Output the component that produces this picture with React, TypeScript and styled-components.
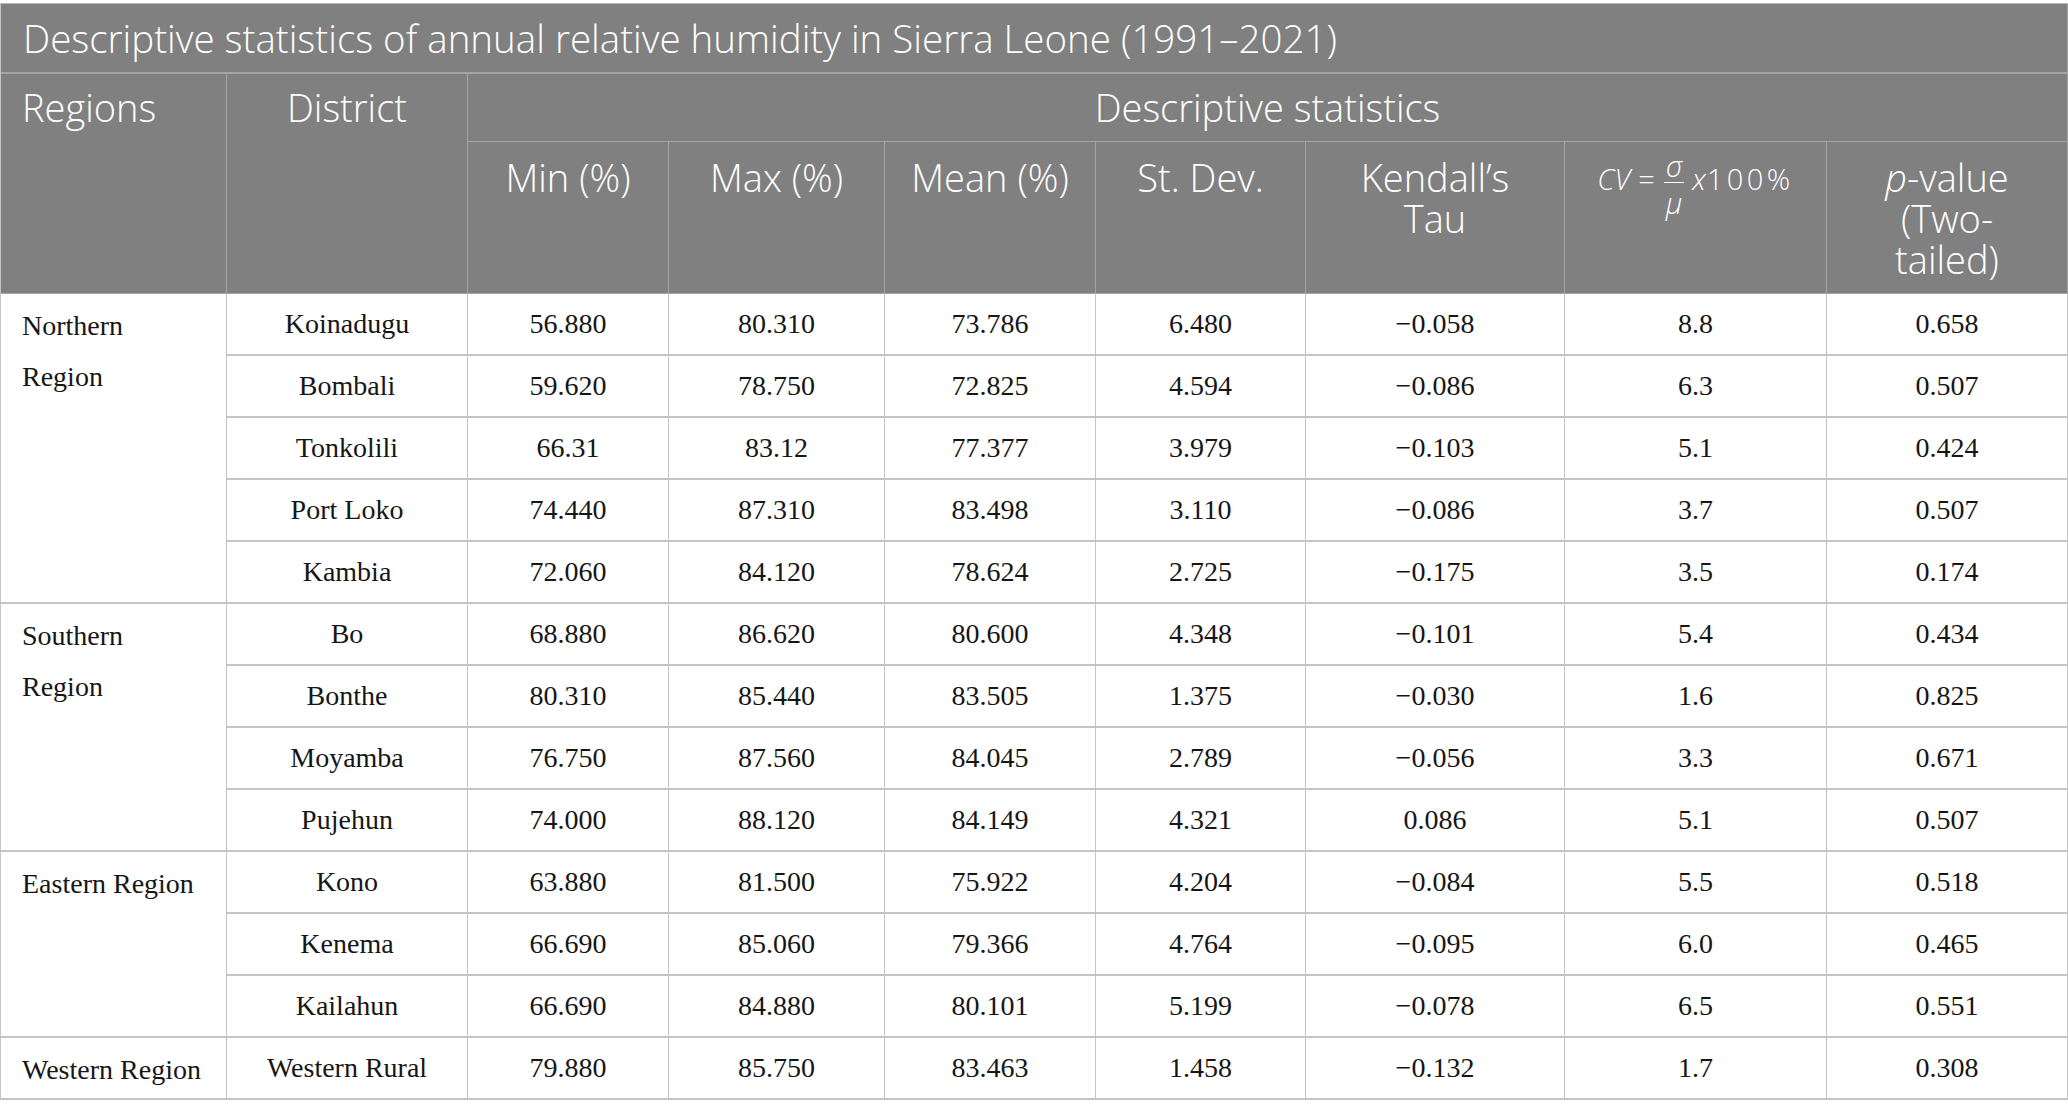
import React from "react";
import styled, { createGlobalStyle } from "styled-components";

const Global = createGlobalStyle`
  html, body { margin: 0; padding: 0; background: #ffffff; }
  body { width: 2068px; }
`;

const HEAD_BG = "#7f807f";
const HEAD_LINE = "#a3a4a3";
const BODY_LINE = "#c4c4c4";
const SANS = `"Open Sans", "Noto Sans", sans-serif`;
const SERIF = `"Liberation Serif", "DejaVu Serif", serif`;

const Page = styled.div`
  padding-top: 3px;
  width: 2068px;
`;

const Sheet = styled.div`
  display: grid;
  grid-template-columns: 226px 241px 201px 216px 211px 210px 259px 262px 241px;
  grid-template-rows: 70px 68px 152px repeat(13, 62px);
  border-top: 1px solid #b9b9b9;
  border-left: 1px solid ${BODY_LINE};
  box-sizing: border-box;
  width: 2068px;
`;

const Title = styled.div`
  grid-column: 1 / -1;
  background: ${HEAD_BG};
  color: #fff;
  font-family: ${SANS};
  font-weight: 300;
  font-size: 38.5px;
  line-height: 41px;
  padding: 14px 22px 0;
  border-right: 1px solid ${HEAD_LINE};
  border-bottom: 2px solid ${HEAD_LINE};
  box-sizing: border-box;
  white-space: nowrap;
`;

const Head = styled.div<{ $rows?: number; $cols?: number; $align?: "left" | "center"; $top?: number }>`
  grid-row: span ${(p) => p.$rows ?? 1};
  grid-column: span ${(p) => p.$cols ?? 1};
  background: ${HEAD_BG};
  color: #fff;
  font-family: ${SANS};
  font-weight: 300;
  font-size: 38px;
  line-height: 41px;
  text-align: ${(p) => p.$align ?? "center"};
  padding: ${(p) => p.$top ?? 15}px ${(p) => (p.$align === "left" ? "12px 0 21px" : "6px 0 6px")};
  border-right: 1px solid ${HEAD_LINE};
  border-bottom: 1px solid ${HEAD_LINE};
  box-sizing: border-box;
`;

const Italic = styled.i`
  font-style: italic;
`;

const Formula = styled.span`
  display: inline-flex;
  align-items: flex-start;
  font-family: ${SANS};
  font-weight: 300;
  font-size: 29px;
  line-height: 28px;
`;

const Sym = styled.span<{ $italic?: boolean; $gap?: number }>`
  margin-top: 13px;
  font-style: ${(p) => (p.$italic ? "italic" : "normal")};
  margin-right: ${(p) => p.$gap ?? 0}px;
`;

const Frac = styled.span`
  display: inline-flex;
  flex-direction: column;
  align-items: center;
  margin: 0 8px 0 9px;
  font-style: italic;
`;

const Numer = styled.span`
  display: block;
  padding: 0 2px 2px;
  border-bottom: 1.5px solid #fff;
  text-align: center;
`;

const Denom = styled.span`
  display: block;
  padding-top: 6px;
  text-align: center;
`;

const Digits = styled.span`
  margin-top: 13px;
  margin-left: 1px;
  letter-spacing: 3.5px;
`;

const RegionCell = styled.div<{ $rows: number }>`
  grid-row: span ${(p) => p.$rows};
  font-family: ${SERIF};
  font-size: 28px;
  line-height: 51px;
  color: #161616;
  padding: 6px 10px 0 21px;
  border-right: 1px solid ${BODY_LINE};
  border-bottom: 2px solid ${BODY_LINE};
  box-sizing: border-box;
`;

const Line = styled.div`
  white-space: nowrap;
`;

const Cell = styled.div`
  display: flex;
  align-items: center;
  justify-content: center;
  font-family: ${SERIF};
  font-size: 28px;
  color: #161616;
  border-right: 1px solid ${BODY_LINE};
  border-bottom: 2px solid ${BODY_LINE};
  box-sizing: border-box;
  white-space: nowrap;
`;

type Row = [string, string, string, string, string, string, string, string];
type Region = { name: string[]; rows: Row[] };

const DATA: Region[] = [
  {
    name: ["Northern", "Region"],
    rows: [
      ["Koinadugu", "56.880", "80.310", "73.786", "6.480", "−0.058", "8.8", "0.658"],
      ["Bombali", "59.620", "78.750", "72.825", "4.594", "−0.086", "6.3", "0.507"],
      ["Tonkolili", "66.31", "83.12", "77.377", "3.979", "−0.103", "5.1", "0.424"],
      ["Port Loko", "74.440", "87.310", "83.498", "3.110", "−0.086", "3.7", "0.507"],
      ["Kambia", "72.060", "84.120", "78.624", "2.725", "−0.175", "3.5", "0.174"],
    ],
  },
  {
    name: ["Southern", "Region"],
    rows: [
      ["Bo", "68.880", "86.620", "80.600", "4.348", "−0.101", "5.4", "0.434"],
      ["Bonthe", "80.310", "85.440", "83.505", "1.375", "−0.030", "1.6", "0.825"],
      ["Moyamba", "76.750", "87.560", "84.045", "2.789", "−0.056", "3.3", "0.671"],
      ["Pujehun", "74.000", "88.120", "84.149", "4.321", "0.086", "5.1", "0.507"],
    ],
  },
  {
    name: ["Eastern Region"],
    rows: [
      ["Kono", "63.880", "81.500", "75.922", "4.204", "−0.084", "5.5", "0.518"],
      ["Kenema", "66.690", "85.060", "79.366", "4.764", "−0.095", "6.0", "0.465"],
      ["Kailahun", "66.690", "84.880", "80.101", "5.199", "−0.078", "6.5", "0.551"],
    ],
  },
  {
    name: ["Western Region"],
    rows: [["Western Rural", "79.880", "85.750", "83.463", "1.458", "−0.132", "1.7", "0.308"]],
  },
];

export default function App() {
  return (
    <Page>
      <Global />
      <Sheet>
        <Title>Descriptive statistics of annual relative humidity in Sierra Leone (1991–2021)</Title>

        <Head $rows={2} $align="left" $top={13}>Regions</Head>
        <Head $rows={2} $top={13}>District</Head>
        <Head $cols={7} $top={13}>Descriptive statistics</Head>

        <Head>Min (%)</Head>
        <Head>Max (%)</Head>
        <Head>Mean (%)</Head>
        <Head>St. Dev.</Head>
        <Head>
          Kendall’s
          <br />
          Tau
        </Head>
        <Head $top={10}>
          <Formula>
            <Sym $italic $gap={8}>CV</Sym>
            <Sym>=</Sym>
            <Frac>
              <Numer>σ</Numer>
              <Denom>μ</Denom>
            </Frac>
            <Sym $italic>x</Sym>
            <Digits>100%</Digits>
          </Formula>
        </Head>
        <Head>
          <Italic>p</Italic>-value
          <br />
          (Two-
          <br />
          tailed)
        </Head>

        {DATA.map((region) => (
          <React.Fragment key={region.name.join(" ")}>
            <RegionCell $rows={region.rows.length}>
              {region.name.map((l) => (
                <Line key={l}>{l}</Line>
              ))}
            </RegionCell>
            {region.rows.map((row) => (
              <React.Fragment key={row[0]}>
                {row.map((v, i) => (
                  <Cell key={i}>{v}</Cell>
                ))}
              </React.Fragment>
            ))}
          </React.Fragment>
        ))}
      </Sheet>
    </Page>
  );
}
